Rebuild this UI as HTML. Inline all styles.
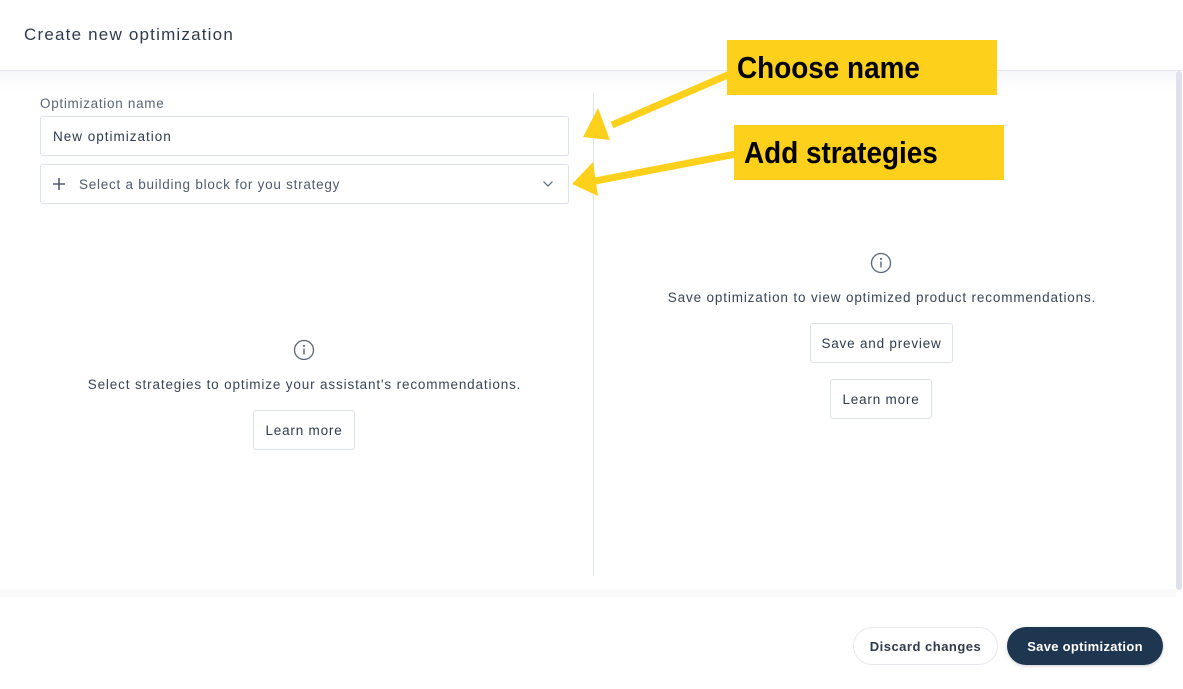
<!DOCTYPE html>
<html><head><style>
*{box-sizing:border-box;margin:0;padding:0}
body{width:1183px;height:689px;position:relative;background:#fff;font-family:"Liberation Sans",sans-serif;color:#2f3b4c;overflow:hidden}
.a{position:absolute}
.btn{position:absolute;border:1px solid #dde1e8;border-radius:3px;background:#fff;font-size:13.5px;letter-spacing:0.8px;color:#2f3b4c;display:flex;align-items:center;justify-content:center}
.t{font-size:13.5px;letter-spacing:0.85px;color:#3a4556;text-align:center;position:absolute;white-space:nowrap}
.lbl{position:absolute;background:#fdd11b;font-weight:bold;font-size:31px;color:#000;padding-left:10px;display:flex;align-items:center}
.lbl span{display:inline-block;transform:scaleX(0.9);transform-origin:left center;white-space:nowrap}
</style></head><body>
<div class="a" style="left:24px;top:25px;font-size:17px;letter-spacing:1.2px;color:#2f3b4c">Create new optimization</div>
<div class="a" style="left:0;top:70px;width:1183px;height:1px;background:#e6e8ec"></div>
<div class="a" style="left:0;top:71px;width:1176px;height:20px;background:linear-gradient(#f6f7f8,#fff)"></div>
<div class="a" style="left:1176px;top:71px;width:6px;height:519px;background:#dfe2ea;border-radius:3px"></div>
<div class="a" style="left:0;top:589px;width:1176px;height:8px;background:#fafafb"></div>
<div class="a" style="left:40px;top:96px;font-size:13.5px;letter-spacing:0.7px;color:#5a6678">Optimization name</div>
<div class="a" style="left:40px;top:116px;width:529px;height:40px;border:1px solid #dde1e8;border-radius:3px;font-size:13.5px;letter-spacing:1px;padding:12px 0 0 12px;color:#2f3b4c">New optimization</div>
<div class="a" style="left:40px;top:164px;width:529px;height:40px;border:1px solid #dde1e8;border-radius:3px;font-size:13.5px;letter-spacing:0.75px;padding:12px 0 0 38px;color:#4f5b6d">Select a building block for you strategy</div>
<svg class="a" style="left:52px;top:177px" width="14" height="14"><path d="M7 1v12M1 7h12" stroke="#4f5b6d" stroke-width="1.6"/></svg>
<svg class="a" style="left:542px;top:180px" width="12" height="8"><path d="M1.5 1.5l4.5 4.5 4.5-4.5" stroke="#5a6678" stroke-width="1.2" fill="none"/></svg>
<div class="a" style="left:593px;top:94px;width:1px;height:482px;background:#dde1e8"></div>
<svg class="a" style="left:293px;top:339px" width="22" height="22"><circle cx="11" cy="11" r="9.5" stroke="#5a6678" stroke-width="1.3" fill="none"/><circle cx="11" cy="6.8" r="1.1" fill="#5a6678"/><path d="M11 9.5v6" stroke="#5a6678" stroke-width="1.4"/></svg>
<div class="t" style="left:40px;width:529px;top:377px">Select strategies to optimize your assistant's recommendations.</div>
<div class="btn" style="left:253px;top:410px;width:102px;height:40px">Learn more</div>
<svg class="a" style="left:870px;top:252px" width="22" height="22"><circle cx="11" cy="11" r="9.5" stroke="#5a6678" stroke-width="1.3" fill="none"/><circle cx="11" cy="6.8" r="1.1" fill="#5a6678"/><path d="M11 9.5v6" stroke="#5a6678" stroke-width="1.4"/></svg>
<div class="t" style="left:594px;width:576px;top:290px">Save optimization to view optimized product recommendations.</div>
<div class="btn" style="left:810px;top:323px;width:143px;height:40px">Save and preview</div>
<div class="btn" style="left:830px;top:379px;width:102px;height:40px">Learn more</div>
<div class="a" style="left:853px;top:627px;width:145px;height:38px;border:1px solid #e6e8ee;border-radius:19px;font-size:13px;letter-spacing:0.5px;font-weight:bold;color:#2f3b4c;display:flex;align-items:center;justify-content:center">Discard changes</div>
<div class="a" style="left:1007px;top:627px;width:156px;height:38px;background:#1f3651;border-radius:19px;font-size:13px;letter-spacing:0.3px;font-weight:bold;color:#fff;display:flex;align-items:center;justify-content:center;box-shadow:0 1px 3px rgba(0,0,0,.2)">Save optimization</div>
<svg class="a" style="left:0;top:0" width="1183" height="689">
<path d="M730 74L612 125" stroke="#fdd11b" stroke-width="7"/>
<polygon points="583,137 598,108 610,140" fill="#fdd11b"/>
<path d="M736 154L595 181" stroke="#fdd11b" stroke-width="7"/>
<polygon points="572,184 593,162 598,196" fill="#fdd11b"/>
</svg>
<div class="lbl" style="left:727px;top:40px;width:270px;height:55px"><span>Choose name</span></div>
<div class="lbl" style="left:734px;top:125px;width:270px;height:55px"><span>Add strategies</span></div>
</body></html>
